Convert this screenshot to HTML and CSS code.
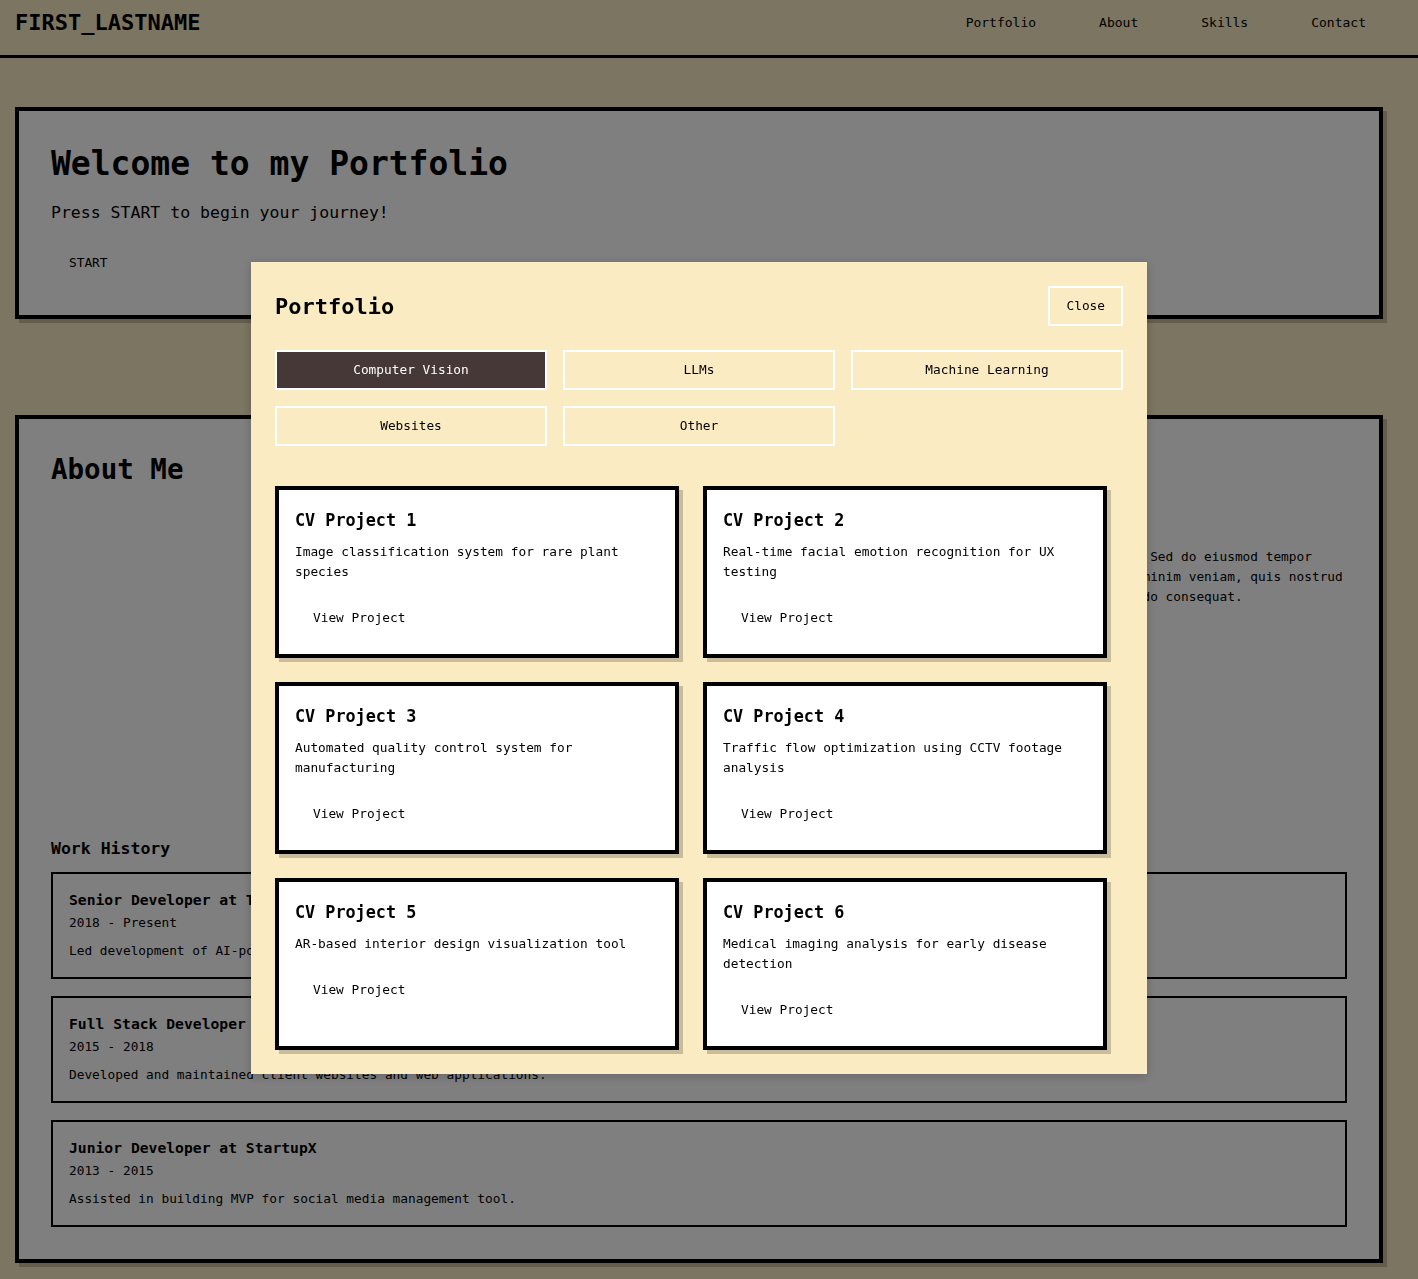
FILE: index.html
```html
<!DOCTYPE html>
<html lang="en">
<head>
    <meta charset="UTF-8">
    <meta name="viewport" content="width=device-width, initial-scale=1.0">
    <title>FIRST_LASTNAME - Portfolio</title>
    <link rel="stylesheet" href="styles.css">
</head>
<body>
    <!-- Top bar -->
    <header class="site-header">
        <div class="logo">FIRST_LASTNAME</div>
        <nav class="nav">
            <a href="#portfolio">Portfolio</a>
            <a href="#about">About</a>
            <a href="#skills">Skills</a>
            <a href="#contact">Contact</a>
        </nav>
    </header>

    <main class="page">
        <!-- Hero -->
        <section class="box hero">
            <h1>Welcome to my Portfolio</h1>
            <p>Press START to begin your journey!</p>
            <button class="start-btn">START</button>
        </section>

        <!-- About -->
        <section class="box about" id="about">
            <h2>About Me</h2>
            <div class="about-grid">
                <div class="about-photo"></div>
                <div class="about-text">
                    <p>Lorem ipsum dolor sit amet, consectetur adipiscing elit. Sed do eiusmod tempor incididunt ut labore et dolore magna aliqua. Ut enim ad minim veniam, quis nostrud exercitation ullamco laboris nisi ut aliquip ex ea commodo consequat.</p>
                </div>
            </div>

            <h3 class="work-title">Work History</h3>
            <div class="job">
                <h4>Senior Developer at TechCorp</h4>
                <div class="job-date">2018 - Present</div>
                <p>Led development of AI-powered analytics platform.</p>
            </div>
            <div class="job">
                <h4>Full Stack Developer at WebAgency</h4>
                <div class="job-date">2015 - 2018</div>
                <p>Developed and maintained client websites and web applications.</p>
            </div>
            <div class="job">
                <h4>Junior Developer at StartupX</h4>
                <div class="job-date">2013 - 2015</div>
                <p>Assisted in building MVP for social media management tool.</p>
            </div>
        </section>
    </main>

    <!-- Portfolio modal -->
    <div class="overlay">
        <div class="modal" id="portfolio">
            <div class="modal-head">
                <h2>Portfolio</h2>
                <button class="btn-line">Close</button>
            </div>

            <div class="filters">
                <button class="btn-line active">Computer Vision</button>
                <button class="btn-line">LLMs</button>
                <button class="btn-line">Machine Learning</button>
                <button class="btn-line">Websites</button>
                <button class="btn-line">Other</button>
            </div>

            <div class="projects">
                <div class="card">
                    <h3>CV Project 1</h3>
                    <p>Image classification system for rare plant species</p>
                    <button class="view-btn">View Project</button>
                </div>
                <div class="card">
                    <h3>CV Project 2</h3>
                    <p>Real-time facial emotion recognition for UX testing</p>
                    <button class="view-btn">View Project</button>
                </div>
                <div class="card">
                    <h3>CV Project 3</h3>
                    <p>Automated quality control system for manufacturing</p>
                    <button class="view-btn">View Project</button>
                </div>
                <div class="card">
                    <h3>CV Project 4</h3>
                    <p>Traffic flow optimization using CCTV footage analysis</p>
                    <button class="view-btn">View Project</button>
                </div>
                <div class="card">
                    <h3>CV Project 5</h3>
                    <p>AR-based interior design visualization tool</p>
                    <button class="view-btn">View Project</button>
                </div>
                <div class="card">
                    <h3>CV Project 6</h3>
                    <p>Medical imaging analysis for early disease detection</p>
                    <button class="view-btn">View Project</button>
                </div>
            </div>
        </div>
    </div>
</body>
</html>
```

FILE: styles.css
```css
body {
    margin: 0;
    background-color: #f8eac2;
    color: #000;
    font-family: "DejaVu Sans Mono", monospace;
}

button {
    font-family: inherit;
    font-size: 12.8px;
    line-height: 16px;
    color: #000;
    cursor: pointer;
}

/* header */
.site-header {
    display: flex;
    justify-content: space-between;
    align-items: center;
    padding: 7px 36px 17px 15px;
    border-bottom: 3px solid #000;
}
.logo {
    font-size: 22px;
    font-weight: bold;
}
.nav {
    display: flex;
    gap: 31px;
}
.nav a {
    padding: 8px 16px;
    font-size: 13px;
    color: #000;
    text-decoration: none;
}

/* page */
.page {
    display: flex;
    flex-direction: column;
    gap: 96px;
    padding: 49px 35px 40px 15px;
}
.box {
    background: #fff;
    border: 4px solid #000;
    box-shadow: 4px 4px 0 rgba(0, 0, 0, 0.2);
    padding: 32px;
}
.hero h1 {
    margin: 1px 0 20px;
    font-size: 33px;
}
.hero p {
    margin: 0 0 21px;
    font-size: 16.5px;
}
.start-btn {
    background: #fff;
    border: 2px solid #fff;
    padding: 10px 16px;
}

.about h2 {
    margin: 2px 0 0;
    font-size: 27.5px;
}
.about-grid {
    display: grid;
    grid-template-columns: 1fr 1fr;
    gap: 24px;
    margin-top: 30px;
}
.about-photo {
    height: 290px;
    background: #fff;
}
.about-text p {
    margin: 32px 0 0;
    font-size: 12.8px;
    line-height: 20px;
}
.work-title {
    margin: 34px 0 14px;
    font-size: 16.5px;
}
.job {
    border: 2px solid #000;
    padding: 17px 16px 17px;
    margin-bottom: 17px;
}
.job:last-child {
    margin-bottom: 0;
}
.job h4 {
    margin: 0 0 5px;
    font-size: 14.7px;
}
.job-date {
    font-size: 12.8px;
    line-height: 19px;
}
.job p {
    margin: 9px 0 0;
    font-size: 12.8px;
    line-height: 19px;
}

/* modal */
.overlay {
    position: fixed;
    inset: 0;
    background: rgba(0, 0, 0, 0.5);
}
.modal {
    position: absolute;
    top: 262px;
    left: 251px;
    width: 848px;
    padding: 24px;
    background: #faebc2;
    box-shadow: 0 2px 10px rgba(0, 0, 0, 0.2);
}
.modal-head {
    display: flex;
    justify-content: space-between;
    align-items: center;
    margin-bottom: 24px;
}
.modal-head h2 {
    margin: 0;
    font-size: 22px;
}
.btn-line {
    background: transparent;
    border: 2px solid #fff;
    padding: 10px 16px;
}
.btn-line.active {
    background: #463836;
    color: #fff;
}
.filters {
    display: grid;
    grid-template-columns: repeat(3, 1fr);
    gap: 16px;
    margin-bottom: 40px;
}
.projects {
    display: grid;
    grid-template-columns: repeat(2, 404px);
    gap: 24px;
}
.card {
    background: #fff;
    border: 4px solid #000;
    box-shadow: 4px 4px 0 rgba(0, 0, 0, 0.2);
    padding: 20px 16px 18px;
}
.card h3 {
    margin: 0 0 12px;
    font-size: 16.8px;
}
.card p {
    margin: 0 0 18px;
    font-size: 12.8px;
    line-height: 20px;
}
.view-btn {
    background: #fff;
    border: 2px solid transparent;
    padding: 8px 16px;
}
```
